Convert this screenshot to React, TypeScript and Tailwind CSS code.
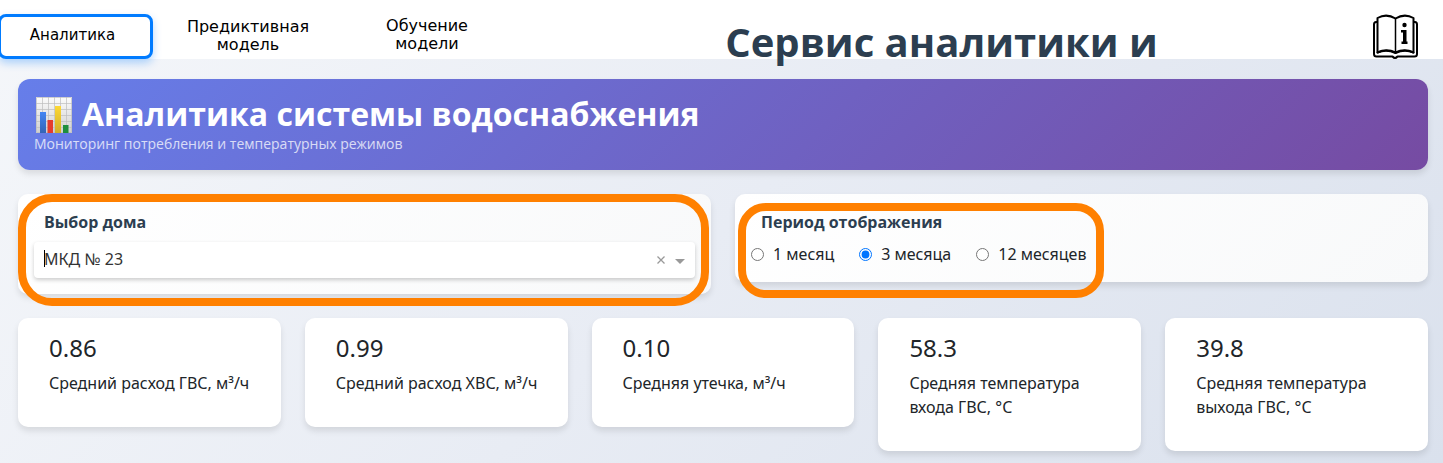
import { useState } from "react";

const periods = ["1 месяц", "3 месяца", "12 месяцев"];

const metrics = [
  { value: "0.86", label: "Средний расход ГВС, м³/ч" },
  { value: "0.99", label: "Средний расход ХВС, м³/ч" },
  { value: "0.10", label: "Средняя утечка, м³/ч" },
  { value: "58.3", label: "Средняя температура входа ГВС, °C" },
  { value: "39.8", label: "Средняя температура выхода ГВС, °C" },
];

function BookIcon() {
  return (
    <svg viewBox="0 0 46 46" className="h-[46px] w-[46px]" fill="none" stroke="#000" strokeWidth="2" strokeLinejoin="round" strokeLinecap="round">
      <path d="M5 8H4Q2 8 2 10.500V40Q2 42.500 4.500 42.500H20.500Q23 45.500 25.500 42.500H42.500Q45 42.500 45 40V10.500Q45 8 43 8H42" />
      <path d="M23.500 4.500Q14.500-1 5.500 4V38.500Q14.500 34 23.500 38.500Q32.500 34 41.500 38.500V4Q32.500-1 23.500 4.500" />
      <path d="M23.500 4.500V38.500" strokeWidth="1.500" />
      <path d="M5.500 38.500Q14.500 35 23.500 39Q32.500 35 41.500 38.500" />
      <circle cx="32.500" cy="11" r="2.200" fill="#000" stroke="none" />
      <path d="M29 16H34.500V27.500H35.500V30H29.500V27.500H31V18.500H29Z" fill="#000" stroke="none" />
    </svg>
  );
}

function ChartIcon() {
  return (
    <svg viewBox="-2 -3 40 40" className="h-10 w-10 shrink-0">
      <defs>
        <linearGradient id="paper" x1="0" y1="0" x2="0" y2="1">
          <stop offset="0" stopColor="#fcfcfc" />
          <stop offset="1" stopColor="#cfcfcf" />
        </linearGradient>
        <linearGradient id="blue" x1="0" y1="0" x2="0" y2="1">
          <stop offset="0" stopColor="#4285f4" />
          <stop offset="1" stopColor="#3564b5" />
        </linearGradient>
        <linearGradient id="yellow" x1="0" y1="0" x2="0" y2="1">
          <stop offset="0" stopColor="#fdd835" />
          <stop offset="1" stopColor="#cfae2b" />
        </linearGradient>
      </defs>
      <rect width="36" height="36" fill="url(#paper)" />
      <path d="M.5.5H35.500V35.500H.5ZM6.500 0V36M12.500 0V36M18.500 0V36M24.500 0V36M30.500 0V36M0 6.500H36M0 12.500H36M0 18.500H36M0 24.500H36M0 30.500H36" stroke="#bdbdbd" strokeWidth=".7" fill="none" />
      <rect x="4" y="15" width="6" height="21" fill="url(#blue)" />
      <rect x="11.500" y="23" width="5.500" height="13" fill="#e53c2e" />
      <rect x="19" y="9" width="6" height="27" fill="url(#yellow)" />
      <rect x="27" y="28" width="5.500" height="8" fill="#1e8e3e" />
    </svg>
  );
}

export default function App() {
  const [period, setPeriod] = useState("3 месяца");
  const [house, setHouse] = useState("МКД № 23");

  return (
    <div className="min-h-screen bg-[linear-gradient(135deg,#f5f7fa,#e8ecf4_50%,#dae1ed)] font-['Noto_Sans',sans-serif] text-base text-[#212529]">
      <header className="flex h-[59px] bg-white">
        <nav className="flex shrink-0 font-['DejaVu_Sans',sans-serif] text-black">
          <button className="mt-[14px] -ml-0.5 h-[45px] w-[155px] rounded-lg border-[3px] border-[#007bff] bg-white pr-1.5 pb-0.5 text-[15px] shadow-[0_4px_8px_rgba(0,123,255,0.3)]">
            Аналитика
          </button>
          <button className="mt-3 w-[190px] px-8 text-base leading-[18px]">Предиктивная модель</button>
          <button className="mt-3 w-[168px] px-8 pb-0.5 text-base leading-[18px]">Обучение модели</button>
        </nav>
        <h1 className="mt-[18px] flex-1 text-center font-['Open_Sans',sans-serif] text-[40px] leading-[48px] font-bold text-[#2c3e50]">
          Сервис аналитики и
        </h1>
        <a href="#help" aria-label="Справка" className="mt-[14px] mr-[25px] shrink-0">
          <BookIcon />
        </a>
      </header>

      <main className="flex flex-col gap-6 pt-5 pr-[15px] pb-3 pl-[18px]">
        <section className="rounded-xl bg-[linear-gradient(135deg,#667eea,#764ba2)] p-4 font-['Open_Sans',sans-serif] text-white shadow-[0_4px_6px_rgba(0,0,0,0.1)]">
          <h2 className="flex h-[38px] items-center gap-2 text-[32px] leading-[38px] font-bold">
            <ChartIcon />
            Аналитика системы водоснабжения
          </h2>
          <p className="text-sm leading-[21px] opacity-75">Мониторинг потребления и температурных режимов</p>
        </section>

        <div className="grid grid-cols-2 items-start gap-6">
          <section className="relative rounded-[10px] bg-[linear-gradient(135deg,#ffffff,#f8f9fa)] p-4 shadow-[0_4px_6px_rgba(0,0,0,0.1)]">
            <label htmlFor="house" className="mb-2 block pl-2.5 font-['Open_Sans',sans-serif] font-bold text-[#2c3e50]">
              Выбор дома
            </label>
            <div className="relative flex h-9 items-center rounded bg-white pr-2.5 shadow-[0_2px_4px_rgba(0,0,0,0.2)]">
              <span className="absolute top-2 left-2.5 h-[17px] w-px bg-black" />
              <select
                id="house"
                value={house}
                onChange={(e) => setHouse(e.target.value)}
                className="h-9 flex-1 appearance-none bg-transparent pb-0.5 pl-2.5 text-[#333] outline-none"
              >
                <option>МКД № 23</option>
                <option value="" />
              </select>
              <button aria-label="Очистить" onClick={() => setHouse("")} className="mr-2.5">
                <svg viewBox="0 0 8 8" className="h-2 w-2" stroke="#999" strokeWidth="1.300">
                  <path d="M.5.5 7.500 7.500M7.500.5.5 7.500" />
                </svg>
              </button>
              <svg viewBox="0 0 10 5" className="mt-0.5 h-[5px] w-2.5" fill="#999">
                <path d="M0 0H10L5 5Z" />
              </svg>
            </div>
            <div className="pointer-events-none absolute top-0 right-0.5 -bottom-3 left-0 rounded-[34px] border-8 border-[#ff8000]" />
          </section>

          <section className="relative rounded-[10px] bg-[linear-gradient(135deg,#ffffff,#f8f9fa)] p-4 shadow-[0_4px_6px_rgba(0,0,0,0.1)]">
            <fieldset>
              <legend className="mb-2 pl-2.5 font-['Open_Sans',sans-serif] font-bold text-[#2c3e50]">Период отображения</legend>
              <div className="flex gap-[25px]">
                {periods.map((p) => (
                  <label key={p} className="flex items-center gap-[9px]">
                    <input
                      type="radio"
                      name="period"
                      checked={period === p}
                      onChange={() => setPeriod(p)}
                      className="h-[13px] w-[13px] accent-[#0075ff]"
                    />
                    {p}
                  </label>
                ))}
              </div>
            </fieldset>
            <div className="pointer-events-none absolute top-[9px] -bottom-4 left-[3px] w-[366px] rounded-[28px] border-8 border-[#ff8000]" />
          </section>
        </div>

        <div className="grid grid-cols-5 items-start gap-6">
          {metrics.map((m) => (
            <article key={m.label} className="rounded-[10px] bg-white pt-4 pr-5 pb-8 pl-[31px] shadow-[0_4px_6px_rgba(0,0,0,0.1)]">
              <div className="mb-[9px] text-2xl leading-7">{m.value}</div>
              <div>{m.label}</div>
            </article>
          ))}
        </div>
      </main>
    </div>
  );
}
